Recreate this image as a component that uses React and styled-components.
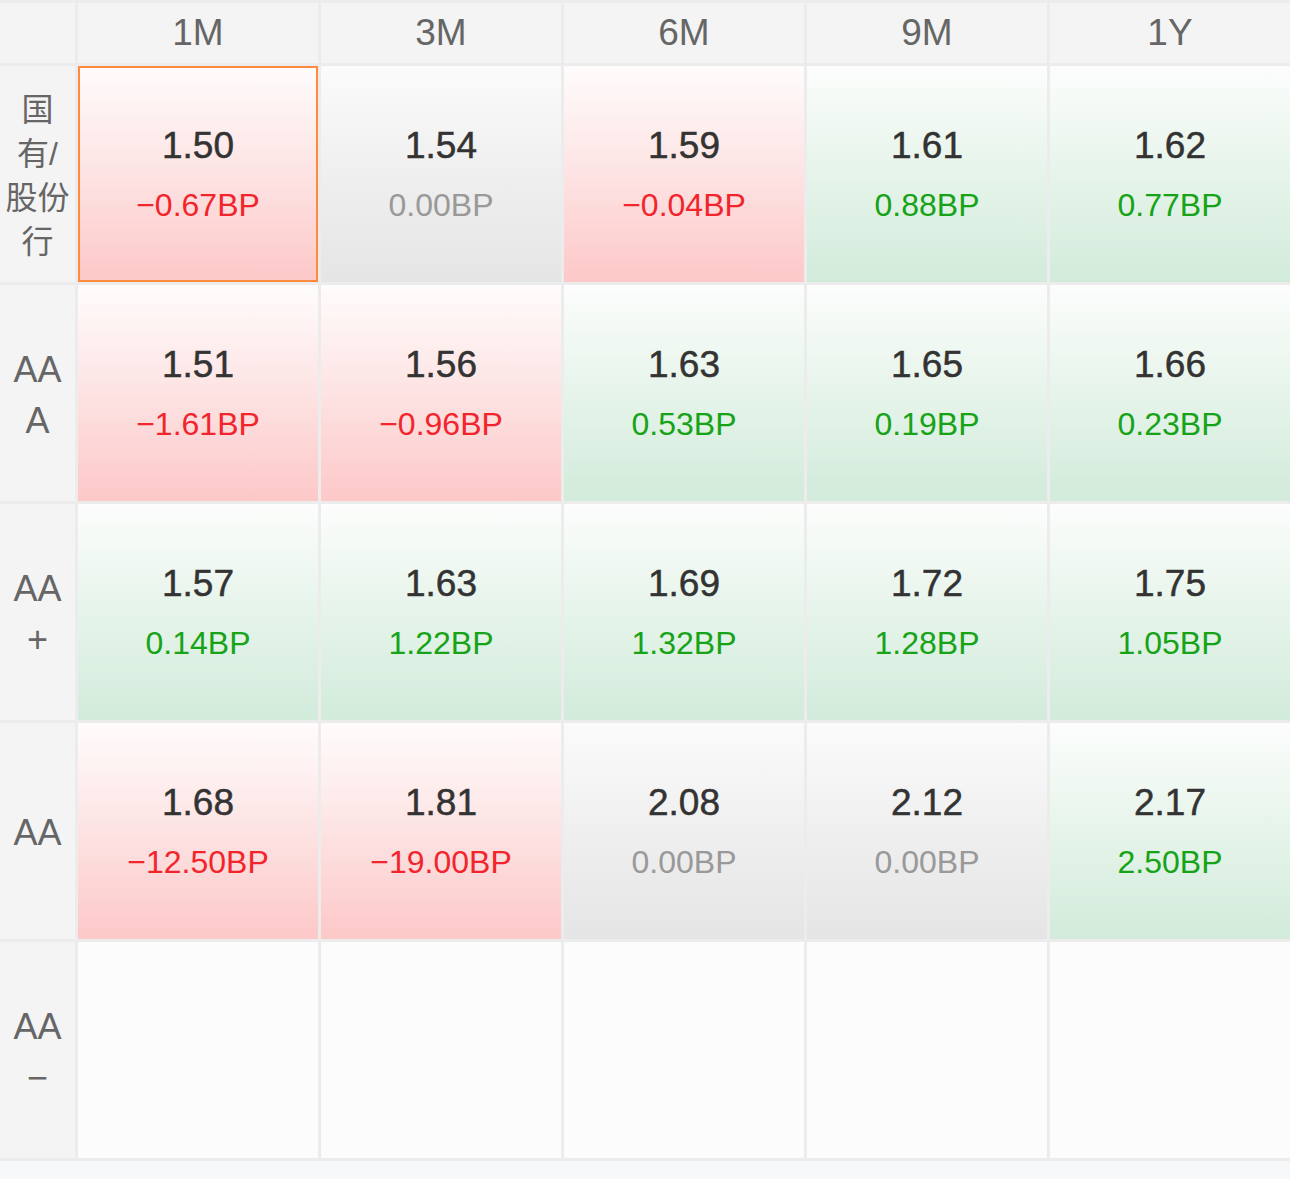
import styled, { createGlobalStyle, css } from 'styled-components'

const GlobalStyle = createGlobalStyle`
  html, body {
    margin: 0;
    padding: 0;
    background: #f7f8fa;
  }
  body {
    font-family: "Liberation Sans", "Noto Sans CJK SC", sans-serif;
  }
`

const tenors = ['1M', '3M', '6M', '9M', '1Y']

const rows = [
  {
    label: ['国', '有/', '股份', '行'],
    cjk: true,
    cells: [
      { v: '1.50', c: '−0.67BP', t: 'down', selected: true },
      { v: '1.54', c: '0.00BP', t: 'flat' },
      { v: '1.59', c: '−0.04BP', t: 'down' },
      { v: '1.61', c: '0.88BP', t: 'up' },
      { v: '1.62', c: '0.77BP', t: 'up' },
    ],
  },
  {
    label: ['AA', 'A'],
    cells: [
      { v: '1.51', c: '−1.61BP', t: 'down' },
      { v: '1.56', c: '−0.96BP', t: 'down' },
      { v: '1.63', c: '0.53BP', t: 'up' },
      { v: '1.65', c: '0.19BP', t: 'up' },
      { v: '1.66', c: '0.23BP', t: 'up' },
    ],
  },
  {
    label: ['AA', '+'],
    cells: [
      { v: '1.57', c: '0.14BP', t: 'up' },
      { v: '1.63', c: '1.22BP', t: 'up' },
      { v: '1.69', c: '1.32BP', t: 'up' },
      { v: '1.72', c: '1.28BP', t: 'up' },
      { v: '1.75', c: '1.05BP', t: 'up' },
    ],
  },
  {
    label: ['AA'],
    cells: [
      { v: '1.68', c: '−12.50BP', t: 'down' },
      { v: '1.81', c: '−19.00BP', t: 'down' },
      { v: '2.08', c: '0.00BP', t: 'flat' },
      { v: '2.12', c: '0.00BP', t: 'flat' },
      { v: '2.17', c: '2.50BP', t: 'up' },
    ],
  },
  {
    label: ['AA', '−'],
    cells: [null, null, null, null, null],
  },
]

const backgrounds = {
  down: 'linear-gradient(180deg, #fffcfc 0%, #fde3e3 50%, #fdc8c8 100%)',
  up: 'linear-gradient(180deg, #fcfdfc 0%, #e6f4ea 50%, #d2ebdb 100%)',
  flat: 'linear-gradient(180deg, #fbfbfb 0%, #efefef 50%, #e5e5e5 100%)',
  empty: '#fcfcfc',
}

const changeColors = {
  down: '#f2252c',
  up: '#17a317',
  flat: '#999999',
}

const Page = styled.div`
  width: 1290px;
  min-height: 1179px;
  background: #f7f8fa;
`

const Grid = styled.div`
  display: grid;
  grid-template-columns: 75px repeat(5, 240px);
  grid-template-rows: 60px repeat(5, 216px);
  gap: 3px;
  padding: 3px 0;
  background: #ececec;
`

const Corner = styled.div`
  background: #f4f4f4;
`

const HeadCell = styled.div`
  background: #f4f4f4;
  color: #666;
  font-size: 37px;
  line-height: 60px;
  text-align: center;
`

const RowLabel = styled.div`
  background: #f4f4f4;
  color: #666;
  display: flex;
  flex-direction: column;
  align-items: center;
  justify-content: center;
  text-align: center;
  ${p =>
    p.$cjk
      ? css`
          font-size: 32px;
          line-height: 44px;
          padding-top: 4px;
        `
      : css`
          font-size: 36px;
          line-height: 51px;
          padding-top: 3px;
        `}
`

const LabelLine = styled.span`
  display: block;
  white-space: nowrap;
`

const Cell = styled.div`
  background: ${p => backgrounds[p.$trend]};
  display: flex;
  flex-direction: column;
  align-items: center;
  justify-content: center;
  gap: 9px;
  padding-top: 2px;
  box-sizing: border-box;
  ${p =>
    p.$selected &&
    css`
      box-shadow: inset 0 0 0 2px #ff8a3d;
    `}
`

const Value = styled.div`
  color: #333;
  font-size: 37px;
  line-height: 50px;
  -webkit-text-stroke: 0.5px #333;
`

const Change = styled.div`
  color: ${p => changeColors[p.$trend]};
  font-size: 32px;
  line-height: 50px;
`

const App = () => {
  return (
    <Page>
      <GlobalStyle />
      <Grid>
        <Corner />
        {tenors.map(t => (
          <HeadCell key={t}>{t}</HeadCell>
        ))}
        {rows.map((row, ri) => (
          <>
            <RowLabel key={`l${ri}`} $cjk={row.cjk}>
              {row.label.map((line, li) => (
                <LabelLine key={li}>{line}</LabelLine>
              ))}
            </RowLabel>
            {row.cells.map((cell, ci) =>
              cell ? (
                <Cell key={`c${ri}-${ci}`} $trend={cell.t} $selected={cell.selected}>
                  <Value>{cell.v}</Value>
                  <Change $trend={cell.t}>{cell.c}</Change>
                </Cell>
              ) : (
                <Cell key={`c${ri}-${ci}`} $trend="empty" />
              )
            )}
          </>
        ))}
      </Grid>
    </Page>
  )
}

export default App
